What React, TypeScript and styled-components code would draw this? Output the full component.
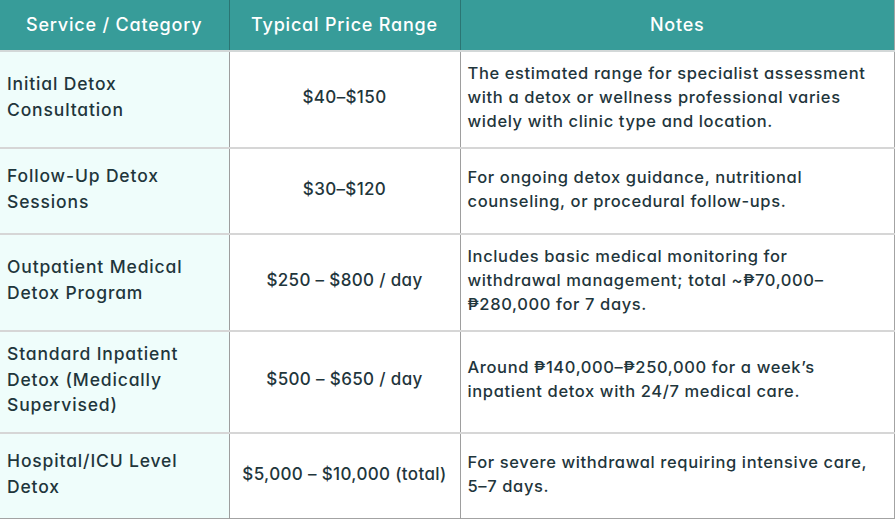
import React from "react";
import styled, { createGlobalStyle } from "styled-components";

const Global = createGlobalStyle`
  html, body { margin: 0; padding: 0; background: #ffffff; }
  body { font-family: Inter, "Noto Sans", sans-serif; color: #1f363c; }
`;

const Table = styled.table`
  width: 895px;
  border-collapse: collapse;
  table-layout: fixed;
  font-family: Inter, "Noto Sans", sans-serif;
  font-feature-settings: "cv11" 1;
  border-right: 1px solid #a3a3a3;
  border-bottom: 1px solid #a3a3a3;
`;

const HeadCell = styled.th`
  height: 51px;
  box-sizing: border-box;
  padding: 0 8px 2px;
  background: #379c99;
  color: #ffffff;
  font-size: 18px;
  font-weight: 500;
  text-align: center;
  border-left: 1px solid #2b7573;
  border-bottom: 2px solid #d3d8d8;
  letter-spacing: 0.8px;
  &:first-child { border-left: none; }
`;

const kindStyles = {
  name: { size: "17.5px", lh: "25.6px", ls: "0.85px", bg: "#effdfb", align: "left" },
  price: { size: "17px", lh: "26px", ls: "0.35px", bg: "#ffffff", align: "center" },
  note: { size: "16.5px", lh: "24px", ls: "0.62px", bg: "#ffffff", align: "left" },
} as const;

type Kind = keyof typeof kindStyles;

const Cell = styled.td<{ $kind: Kind }>`
  height: 86px;
  box-sizing: border-box;
  padding: 9px 7px 14px;
  vertical-align: middle;
  border-left: 1px solid #9e9e9e;
  border-bottom: 2px solid #d6d6d6;
  font-weight: 500;
  color: #1f363c;
  background: ${(p) => kindStyles[p.$kind].bg};
  font-size: ${(p) => kindStyles[p.$kind].size};
  line-height: ${(p) => kindStyles[p.$kind].lh};
  letter-spacing: ${(p) => kindStyles[p.$kind].ls};
  text-align: ${(p) => kindStyles[p.$kind].align};
  &:first-child { border-left: none; }
`;

const Row = styled.tr`
  &:last-child td { border-bottom: none; }
`;

const rows = [
  {
    name: "Initial Detox Consultation",
    price: "$40–$150",
    note: "The estimated range for specialist assessment with a detox or wellness professional varies widely with clinic type and location.",
  },
  {
    name: "Follow-Up Detox Sessions",
    price: "$30–$120",
    note: "For ongoing detox guidance, nutritional counseling, or procedural follow-ups.",
  },
  {
    name: "Outpatient Medical Detox Program",
    price: "$250 – $800 / day",
    note: "Includes basic medical monitoring for withdrawal\u00a0management; total ~₱70,000–₱280,000 for 7 days.",
  },
  {
    name: "Standard Inpatient Detox (Medically Supervised)",
    price: "$500 – $650 / day",
    note: "Around ₱140,000–₱250,000 for a week’s inpatient detox with 24/7 medical care.",
  },
  {
    name: "Hospital/ICU Level Detox",
    price: "$5,000 – $10,000 (total)",
    note: "For severe withdrawal requiring intensive care, 5–7 days.",
  },
];

export default function App() {
  return (
    <>
      <Global />
      <Table>
        <colgroup>
          <col style={{ width: 229 }} />
          <col style={{ width: 231 }} />
          <col />
        </colgroup>
        <thead>
          <tr>
            <HeadCell>Service / Category</HeadCell>
            <HeadCell>Typical Price Range</HeadCell>
            <HeadCell>Notes</HeadCell>
          </tr>
        </thead>
        <tbody>
          {rows.map((r) => (
            <Row key={r.name}>
              <Cell $kind="name">{r.name}</Cell>
              <Cell $kind="price">{r.price}</Cell>
              <Cell $kind="note">{r.note}</Cell>
            </Row>
          ))}
        </tbody>
      </Table>
    </>
  );
}
